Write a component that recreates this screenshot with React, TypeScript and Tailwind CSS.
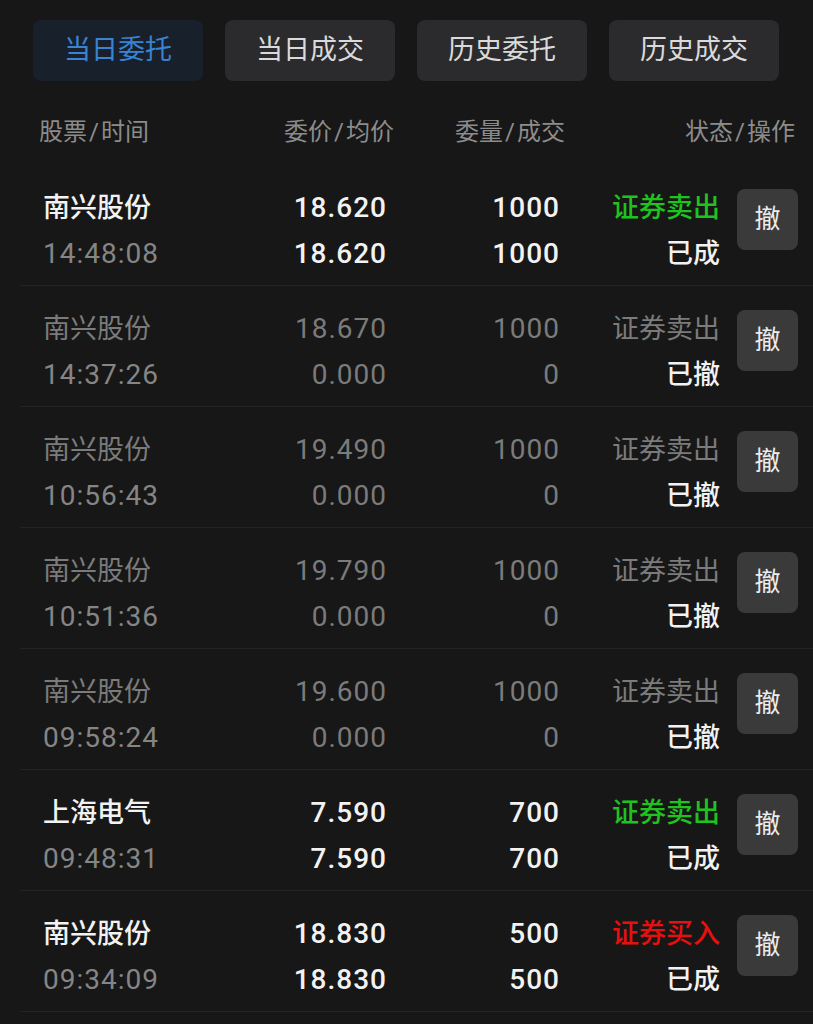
import React from 'react';

type Order = {
  name: string;
  time: string;
  price: string;
  avg: string;
  qty: string;
  done: string;
  side: 'sell' | 'buy';
  status: string;
  active: boolean;
};

const orders: Order[] = [
  { name: '南兴股份', time: '14:48:08', price: '18.620', avg: '18.620', qty: '1000', done: '1000', side: 'sell', status: '已成', active: true },
  { name: '南兴股份', time: '14:37:26', price: '18.670', avg: '0.000', qty: '1000', done: '0', side: 'sell', status: '已撤', active: false },
  { name: '南兴股份', time: '10:56:43', price: '19.490', avg: '0.000', qty: '1000', done: '0', side: 'sell', status: '已撤', active: false },
  { name: '南兴股份', time: '10:51:36', price: '19.790', avg: '0.000', qty: '1000', done: '0', side: 'sell', status: '已撤', active: false },
  { name: '南兴股份', time: '09:58:24', price: '19.600', avg: '0.000', qty: '1000', done: '0', side: 'sell', status: '已撤', active: false },
  { name: '上海电气', time: '09:48:31', price: '7.590', avg: '7.590', qty: '700', done: '700', side: 'sell', status: '已成', active: true },
  { name: '南兴股份', time: '09:34:09', price: '18.830', avg: '18.830', qty: '500', done: '500', side: 'buy', status: '已成', active: true },
];

const tabs = ['当日委托', '当日成交', '历史委托', '历史成交'];

const FONT = { fontFamily: 'Roboto, "Noto Sans CJK SC", sans-serif' };

function OrderRow({ o }: { o: Order }) {
  const num = o.active ? 'text-[#f2f2f2] font-medium' : 'text-[#7b7b7b]';
  let sideColor = 'text-[#7b7b7b]';
  if (o.active) sideColor = o.side === 'buy' ? 'text-[#e80f0f] font-medium' : 'text-[#1fc21f] font-medium';

  return (
    <div className="ml-[20px] flex border-b border-[#232323] pt-[20px] pb-[8px]">
      <div className="w-[223px] pl-[23px] text-[27px] leading-[46px]">
        <div className={o.active ? 'text-[#f2f2f2] font-medium' : 'text-[#7b7b7b]'}>{o.name}</div>
        <div className="text-[28px] tracking-[1px] text-[#858585]">{o.time}</div>
      </div>
      <div className={`w-[144px] text-right text-[28px] leading-[46px] tracking-[1px] ${num}`}>
        <div>{o.price}</div>
        <div>{o.avg}</div>
      </div>
      <div className={`w-[173px] text-right text-[28px] leading-[46px] tracking-[1px] ${num}`}>
        <div>{o.qty}</div>
        <div>{o.done}</div>
      </div>
      <div className="w-[160px] text-right text-[27px] leading-[46px]">
        <div className={sideColor}>{o.side === 'buy' ? '证券买入' : '证券卖出'}</div>
        <div className="text-[#f2f2f2] font-medium">{o.status}</div>
      </div>
      <button className="ml-[17px] mt-[4px] flex h-[61px] w-[61px] items-center justify-center rounded-[8px] bg-[#3a3a3a] text-[26px] text-[#ececec]">
        撤
      </button>
    </div>
  );
}

export default function App(): React.ReactElement {
  return (
    <div className="min-h-[1024px] w-[813px] bg-[#171717] pt-[20px]" style={FONT}>
      <div className="flex gap-[22px] pl-[33px]">
        {tabs.map((t, i) => (
          <div
            key={t}
            className={`flex h-[61px] w-[170px] items-center justify-center rounded-[8px] text-[27px] ${
              i === 0 ? 'bg-[#18202b] text-[#3a83d2]' : 'bg-[#2b2b2d] text-[#dadada]'
            }`}
          >
            {t}
          </div>
        ))}
      </div>

      <div className="flex pt-[36px] pb-[18px] text-[24px] leading-[30px] text-[#8c8c8c]">
        <div className="w-[240px] pl-[39px]">股票<span className="mx-[2px]">/</span>时间</div>
        <div className="w-[154px] text-right">委价<span className="mx-[2px]">/</span>均价</div>
        <div className="w-[171px] text-right">委量<span className="mx-[2px]">/</span>成交</div>
        <div className="w-[230px] text-right">状态<span className="mx-[2px]">/</span>操作</div>
      </div>

      <div>
        {orders.map((o, i) => (
          <OrderRow key={i} o={o} />
        ))}
      </div>
    </div>
  );
}
